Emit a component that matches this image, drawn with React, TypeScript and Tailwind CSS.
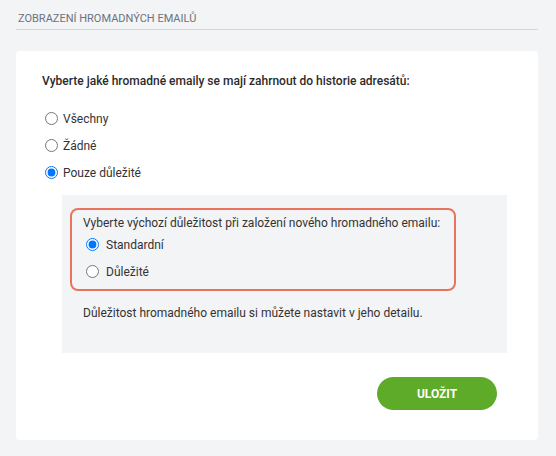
import { useState } from 'react';

const font = { fontFamily: 'Roboto, "Noto Sans", sans-serif' };

function Radio({
  name,
  label,
  checked,
  onChange,
  gap = 'gap-[5px]',
}: {
  name: string;
  label: string;
  checked: boolean;
  onChange: () => void;
  gap?: string;
}) {
  return (
    <label className={`flex h-[27px] items-center ${gap} text-[12px] text-[#333333]`}>
      <input
        type="radio"
        name={name}
        checked={checked}
        onChange={onChange}
        className="ml-[3px] h-[13px] w-[13px]"
      />
      <span>{label}</span>
    </label>
  );
}

export default function App() {
  const [scope, setScope] = useState('important');
  const [importance, setImportance] = useState('standard');

  return (
    <div className="min-h-screen bg-[#f3f4f6] px-[16px] pt-[12px]" style={font}>
      <div className="w-[522px] border-b border-[#d4d7dc] pb-[3px] pl-[2px] text-[11px] uppercase leading-[14px] text-[#6b7280]">
        Zobrazení hromadných emailů
      </div>

      <div className="mt-[21px] h-[389px] w-[522px] rounded-[4px] bg-white pl-[26px] pr-[31px] pt-[22px]">
        <p className="text-[12px] font-medium leading-[16px] text-[#2b2b2b]">
          Vyberte jaké hromadné emaily se mají zahrnout do historie adresátů:
        </p>

        <div className="mt-[16px] flex flex-col">
          <Radio name="scope" label="Všechny" checked={scope === 'all'} onChange={() => setScope('all')} />
          <Radio name="scope" label="Žádné" checked={scope === 'none'} onChange={() => setScope('none')} />
          <Radio
            name="scope"
            label="Pouze důležité"
            checked={scope === 'important'}
            onChange={() => setScope('important')}
          />
        </div>

        <div className="ml-[20px] mt-[9px] h-[158px] bg-[#f3f4f6] pl-[8px] pt-[13px]">
          <div className="w-[386px] rounded-[8px] border-2 border-[#e9735e] pb-[4px] pl-[11px] pt-[5px]">
            <p className="text-[12px] leading-[16px] text-[#333333]">
              Vyberte výchozí důležitost při založení nového hromadného emailu:
            </p>
            <div className="flex flex-col">
              <Radio
                name="importance"
                label="Standardní"
                gap="gap-[7px]"
                checked={importance === 'standard'}
                onChange={() => setImportance('standard')}
              />
              <Radio
                name="importance"
                label="Důležité"
                gap="gap-[7px]"
                checked={importance === 'important'}
                onChange={() => setImportance('important')}
              />
            </div>
          </div>
          <p className="mt-[14px] pl-[13px] text-[12px] leading-[16px] text-[#333333]">
            Důležitost hromadného emailu si můžete nastavit v jeho detailu.
          </p>
        </div>

        <div className="mt-[24px] flex justify-end pr-[10px]">
          <button className="h-[33px] w-[120px] rounded-full bg-[#5dab29] text-[12px] font-bold text-white">
            ULOŽIT
          </button>
        </div>
      </div>
    </div>
  );
}
